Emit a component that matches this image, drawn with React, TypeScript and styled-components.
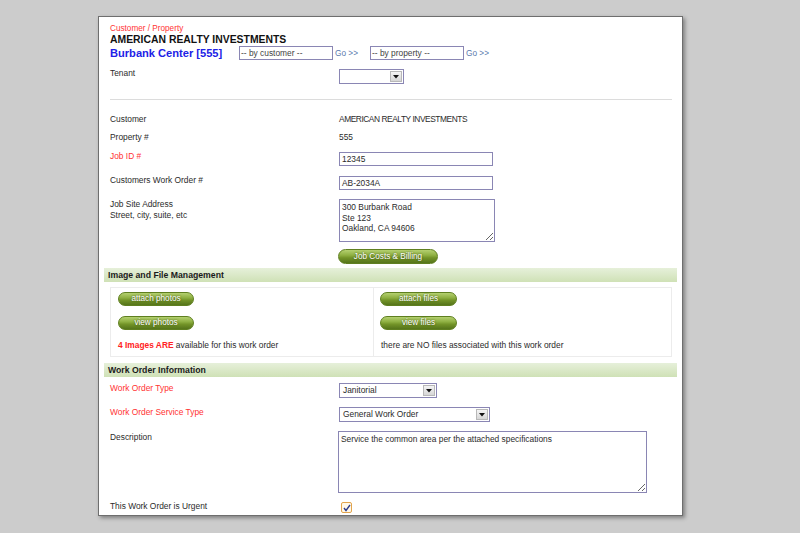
import React from 'react';
import styled, { createGlobalStyle } from 'styled-components';

const Global = createGlobalStyle`
  html, body { margin: 0; padding: 0; background: #cccccc; }
  body { font-family: "Liberation Sans", Arial, sans-serif; color: #2b2b2b; }
  * { box-sizing: border-box; }
`;

const Page = styled.div`
  width: 800px;
  height: 533px;
  padding: 16px 0 0 98px;
  overflow: hidden;
`;

const Panel = styled.div`
  width: 585px;
  height: 500px;
  background: #fff;
  border: 1px solid #6e6e6e;
  box-shadow: 2px 2px 4px rgba(0, 0, 0, 0.38);
  display: flex;
  flex-direction: column;
  overflow: hidden;
`;

const Top = styled.div`
  padding: 6px 10px 0 11px;
  display: flex;
  flex-direction: column;
`;

const Crumb = styled.div`
  font-size: 8.2px;
  line-height: 11px;
  color: #ff3333;
`;

const CustomerTitle = styled.div`
  font-size: 10.4px;
  line-height: 11px;
  font-weight: bold;
  color: #111;
`;

const IdRow = styled.div`
  height: 16px;
  display: flex;
  align-items: center;
`;

const PropertyTitle = styled.div`
  width: 129px;
  font-size: 11.1px;
  font-weight: bold;
  color: #2121e6;
  white-space: nowrap;
`;

const FindInput = styled.div`
  width: 94px;
  height: 14px;
  border: 1px solid #8a86b4;
  font-size: 8.4px;
  line-height: 12px;
  padding-left: 1px;
  color: #444;
  white-space: nowrap;
`;

const GoLink = styled.span<{ $w: number }>`
  width: ${(p) => p.$w}px;
  padding-left: 2px;
  font-size: 8.3px;
  color: #5b79ad;
  white-space: nowrap;
`;

const FieldRow = styled.div<{ $h: number }>`
  height: ${(p) => p.$h}px;
  display: grid;
  grid-template-columns: 229px 1fr;
  align-items: start;
`;

const Label = styled.div<{ $req?: boolean; $pt?: number }>`
  font-size: 8.4px;
  line-height: 11px;
  padding-top: ${(p) => p.$pt ?? 0}px;
  color: ${(p) => (p.$req ? '#ff3333' : '#2b2b2b')};
`;

const Value = styled.div<{ $pt?: number }>`
  font-size: 8.4px;
  line-height: 11px;
  padding-top: ${(p) => p.$pt ?? 0}px;
  color: #2b2b2b;
`;

const CapsValue = styled(Value)`
  letter-spacing: -0.45px;
`;

const Cell = styled.div<{ $mt?: number }>`
  margin-top: ${(p) => p.$mt ?? 0}px;
  display: flex;
`;

const TextInput = styled.div<{ $w: number }>`
  width: ${(p) => p.$w}px;
  height: 14px;
  border: 1px solid #8a86b4;
  font-size: 8.4px;
  line-height: 12px;
  padding-left: 2px;
  color: #2b2b2b;
`;

const Area = styled.textarea<{ $w: number; $h: number }>`
  width: ${(p) => p.$w}px;
  height: ${(p) => p.$h}px;
  border: 1px solid #8a86b4;
  font-family: "Liberation Sans", Arial, sans-serif;
  font-size: 8.4px;
  line-height: 10.5px;
  padding: 2px 2px;
  color: #2b2b2b;
  outline: none;
  margin: 0;
  display: block;
`;

const FakeSelect = styled.div<{ $w: number }>`
  width: ${(p) => p.$w}px;
  height: 15px;
  border: 1px solid #8a86b4;
  display: flex;
  align-items: stretch;
  padding: 1px;
  background: #fff;
`;

const SelectText = styled.span`
  flex: 1;
  font-size: 8.4px;
  line-height: 11px;
  padding-left: 2px;
  color: #2b2b2b;
  white-space: nowrap;
  overflow: hidden;
`;

const SelectArrow = styled.span`
  width: 12px;
  border: 1px solid #b8b8b8;
  background: linear-gradient(#f4f4f4, #d6d6d6);
  display: flex;
  align-items: center;
  justify-content: center;
`;

const Rule = styled.div`
  height: 1px;
  background: #dcdcdc;
  margin: 0 0 14px;
`;

const Pill = styled.div<{ $w: number; $h: number }>`
  width: ${(p) => p.$w}px;
  height: ${(p) => p.$h}px;
  border-radius: 8px;
  border: 1px solid #5f7f20;
  background: linear-gradient(#b4d070 0%, #8fb042 40%, #739428 60%, #55741a 100%);
  color: #fff;
  font-size: 8.2px;
  line-height: ${(p) => p.$h - 2}px;
  text-align: center;
  text-shadow: 0 0 2px rgba(40, 60, 0, 0.9);
  white-space: nowrap;
`;

const SectionBar = styled.div`
  margin: 0 5px;
  height: 14px;
  padding-left: 4px;
  background: linear-gradient(#e6f0da, #cfe1b6);
  font-size: 8.7px;
  line-height: 14px;
  font-weight: bold;
  color: #1a1a1a;
`;

const FilesBox = styled.div`
  margin: 5px 10px 6px 11px;
  height: 70px;
  border: 1px solid #ececec;
  display: grid;
  grid-template-columns: 262px 1fr;
`;

const FilesCell = styled.div<{ $pl: number; $divider?: boolean }>`
  padding: 4px 0 0 ${(p) => p.$pl}px;
  border-left: ${(p) => (p.$divider ? '1px solid #ececec' : 'none')};
  display: flex;
  flex-direction: column;
  gap: 10px;
`;

const Note = styled.div<{ $pl?: number }>`
  font-size: 8.4px;
  line-height: 11px;
  padding-left: ${(p) => p.$pl ?? 0}px;
  color: #2b2b2b;
`;

const Alert = styled.span`
  color: #ff2222;
  font-weight: bold;
`;

const Form = styled.div`
  padding: 6px 10px 0 11px;
  display: flex;
  flex-direction: column;
`;

const CheckBox = styled.span`
  margin-left: 2px;
  width: 11px;
  height: 11px;
  border: 1px solid #e2a44c;
  border-radius: 2px;
  background: #fff8e8;
  display: flex;
  align-items: center;
  justify-content: center;
`;

const Arrow = () => (
  <svg width="6" height="4" viewBox="0 0 6 4">
    <path d="M0 0 H6 L3 3.5 Z" fill="#111" />
  </svg>
);

const Select = ({ w, text }: { w: number; text?: string }) => (
  <FakeSelect $w={w}>
    <SelectText>{text}</SelectText>
    <SelectArrow>
      <Arrow />
    </SelectArrow>
  </FakeSelect>
);

export default function App() {
  return (
    <>
      <Global />
      <Page>
        <Panel>
          <Top>
            <Crumb>Customer / Property</Crumb>
            <CustomerTitle>AMERICAN REALTY INVESTMENTS</CustomerTitle>
            <IdRow>
              <PropertyTitle>Burbank Center [555]</PropertyTitle>
              <FindInput>-- by customer --</FindInput>
              <GoLink $w={37}>Go &gt;&gt;</GoLink>
              <FindInput>-- by property --</FindInput>
              <GoLink $w={30}>Go &gt;&gt;</GoLink>
            </IdRow>
            <FieldRow $h={31} style={{ marginTop: 7 }}>
              <Label>Tenant</Label>
              <Cell $mt={1}>
                <Select w={65} />
              </Cell>
            </FieldRow>
            <Rule />
            <FieldRow $h={18}>
              <Label>Customer</Label>
              <CapsValue>AMERICAN REALTY INVESTMENTS</CapsValue>
            </FieldRow>
            <FieldRow $h={19}>
              <Label>Property #</Label>
              <Value>555</Value>
            </FieldRow>
            <FieldRow $h={24}>
              <Label $req>Job ID #</Label>
              <Cell $mt={1}>
                <TextInput $w={154}>12345</TextInput>
              </Cell>
            </FieldRow>
            <FieldRow $h={24}>
              <Label>Customers Work Order #</Label>
              <Cell $mt={1}>
                <TextInput $w={154}>AB-2034A</TextInput>
              </Cell>
            </FieldRow>
            <FieldRow $h={50}>
              <Label>
                Job Site Address
                <br />
                Street, city, suite, etc
              </Label>
              <Cell>
                <Area $w={156} $h={43} readOnly value={'300 Burbank Road\nSte 123\nOakland, CA 94606'} />
              </Cell>
            </FieldRow>
            <FieldRow $h={19}>
              <span />
              <Cell style={{ marginLeft: -1 }}>
                <Pill $w={100} $h={15}>Job Costs &amp; Billing</Pill>
              </Cell>
            </FieldRow>
          </Top>
          <SectionBar>Image and File Management</SectionBar>
          <FilesBox>
            <FilesCell $pl={7}>
              <Pill $w={76} $h={14}>attach photos</Pill>
              <Pill $w={76} $h={14}>view photos</Pill>
              <Note>
                <Alert>4 Images ARE</Alert> available for this work order
              </Note>
            </FilesCell>
            <FilesCell $pl={6} $divider>
              <Pill $w={77} $h={14}>attach files</Pill>
              <Pill $w={77} $h={14}>view files</Pill>
              <Note $pl={1}>there are NO files associated with this work order</Note>
            </FilesCell>
          </FilesBox>
          <SectionBar>Work Order Information</SectionBar>
          <Form>
            <FieldRow $h={24}>
              <Label $req>Work Order Type</Label>
              <Cell>
                <Select w={98} text="Janitorial" />
              </Cell>
            </FieldRow>
            <FieldRow $h={24}>
              <Label $req>Work Order Service Type</Label>
              <Cell>
                <Select w={151} text="General Work Order" />
              </Cell>
            </FieldRow>
            <FieldRow $h={70}>
              <Label $pt={1}>Description</Label>
              <Cell style={{ marginLeft: -1 }}>
                <Area $w={309} $h={62} readOnly value="Service the common area per the attached specifications" />
              </Cell>
            </FieldRow>
            <FieldRow $h={14}>
              <Label>This Work Order is Urgent</Label>
              <Cell $mt={1}>
                <CheckBox>
                  <svg width="8" height="8" viewBox="0 0 8 8">
                    <path d="M1 4 L3 6.5 L7 1" stroke="#2a3a8c" strokeWidth="1.4" fill="none" />
                  </svg>
                </CheckBox>
              </Cell>
            </FieldRow>
          </Form>
        </Panel>
      </Page>
    </>
  );
}
